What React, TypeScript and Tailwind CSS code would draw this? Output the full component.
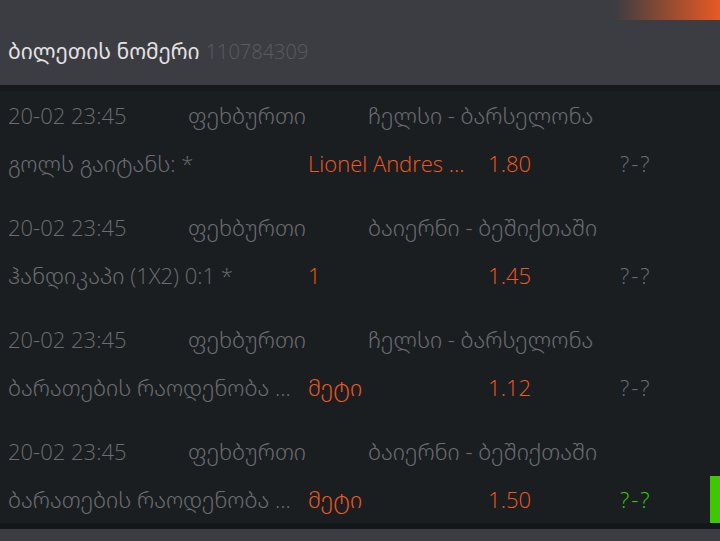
const rows = [
  { date: "20-02 23:45", sport: "ფეხბურთი", teams: "ჩელსი - ბარსელონა", market: "გოლს გაიტანს: *", pick: "Lionel Andres ...", odds: "1.80", score: "?-?", win: false },
  { date: "20-02 23:45", sport: "ფეხბურთი", teams: "ბაიერნი - ბეშიქთაში", market: "ჰანდიკაპი (1X2) 0:1 *", pick: "1", odds: "1.45", score: "?-?", win: false },
  { date: "20-02 23:45", sport: "ფეხბურთი", teams: "ჩელსი - ბარსელონა", market: "ბარათების რაოდენობა ...", pick: "მეტი", odds: "1.12", score: "?-?", win: false },
  { date: "20-02 23:45", sport: "ფეხბურთი", teams: "ბაიერნი - ბეშიქთაში", market: "ბარათების რაოდენობა ...", pick: "მეტი", odds: "1.50", score: "?-?", win: true },
];

export default function App() {
  return (
    <div className="w-[720px] h-[541px] overflow-hidden bg-[#1b1e21] flex flex-col font-['Open_Sans','Noto_Sans_Georgian','DejaVu_Sans',sans-serif] font-light">
      <div className="h-[85px] shrink-0 bg-[#3c3d42] flex flex-col">
        <div className="h-[20px] flex justify-end">
          <div className="w-[105px] h-full bg-gradient-to-r from-transparent to-[#e85a24]" />
        </div>
        <div className="flex-1 flex items-center px-2 pb-[2px]">
          <span className="text-[21px] font-normal text-[#e2e2e4]">ბილეთის ნომერი</span>
          <span className="ml-[6px] text-[20px] text-[#5a5b60]">110784309</span>
        </div>
      </div>
      <div className="h-[6px] shrink-0 bg-[#15191b]" />

      <div className="flex-1 flex flex-col text-[22px] text-[#6a6d71]">
        {rows.map((r, i) => (
          <div key={i} className="flex flex-col pb-4 last:pb-0">
            <div className="h-[48px] flex items-center px-2">
              <span className="w-[180px]">{r.date}</span>
              <span className="w-[180px]">{r.sport}</span>
              <span>{r.teams}</span>
            </div>
            <div className="h-[48px] flex items-center pl-2 relative">
              <span className="w-[300px] whitespace-nowrap">{r.market}</span>
              <span className="w-[140px] text-[#f0591f] whitespace-nowrap">{r.pick}</span>
              <span className="w-[83px] text-right text-[#f0591f]">{r.odds}</span>
              <span className={r.win ? "ml-[89px] tracking-[2px] text-[#3dc800]" : "ml-[89px] tracking-[2px]"}>{r.score}</span>
              {r.win && <div className="absolute right-0 top-[1px] bottom-0 w-[10px] bg-[#3dc800]" />}
            </div>
          </div>
        ))}
      </div>

      <div className="h-[6px] shrink-0 bg-[#131719]" />
      <div className="h-[13px] shrink-0 bg-[#3c3d42]" />
    </div>
  );
}
